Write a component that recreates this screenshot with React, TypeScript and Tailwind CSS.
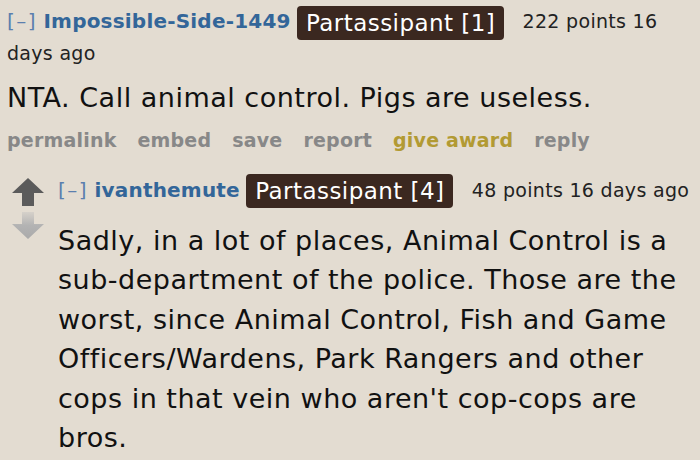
const Badge = ({ children }: { children: React.ReactNode }) => (
  <span className="-my-[2px] inline-block h-[34px] rounded-[4px] bg-[#3b2820] px-[9px] align-middle text-[23px] leading-[34px] tracking-[0.45px] text-white">{children}</span>
)

const UpArrow = () => (
  <svg width="32" height="28" viewBox="0 0 32 28">
    <polygon points="16,0 32,15 22,15 22,28 10,28 10,15 0,15" fill="#5b5b5b" />
  </svg>
)

const DownArrow = () => (
  <svg width="32" height="27" viewBox="0 0 32 27">
    <defs>
      <linearGradient id="dn" x1="0" y1="0" x2="0" y2="1">
        <stop offset="0" stopColor="#d6d1ca" />
        <stop offset="0.5" stopColor="#b3b3b3" />
        <stop offset="1" stopColor="#aaaaaa" />
      </linearGradient>
    </defs>
    <polygon points="10,0 22,0 22,12 32,12 16,27 0,12 10,12" fill="url(#dn)" />
  </svg>
)

export default function App() {
  return (
    <div className="h-[460px] w-[700px] overflow-hidden bg-[#e3dcd1] font-['DejaVu_Sans',Verdana,sans-serif] text-[#111]">
      {/* top-level comment */}
      <div className="pl-[7px] pr-2 pt-[6px]">
        <p className="text-[20px] leading-[31px] text-[#222]">
          <span className="tracking-[1.5px] text-[#5b7fae]">[–]</span>{' '}
          <span className="font-bold tracking-[0.2px] text-[#336699]">Impossible-Side-1449</span>{' '}
          <Badge>Partassipant [1]</Badge>{' '}
          <span className="ml-[12px] text-[19px] tracking-[0.3px]">222 points 16 days ago</span>
        </p>
        <p className="mt-[9px] text-[27px] leading-[40px] tracking-[0.5px]">NTA. Call animal control. Pigs are useless.</p>
        <div className="mt-[6px] flex gap-[21px] text-[19px] font-bold leading-[32px] tracking-[0.2px] text-[#888]">
          <span>permalink</span>
          <span>embed</span>
          <span>save</span>
          <span>report</span>
          <span className="text-[#b29a33]">give award</span>
          <span>reply</span>
        </div>
      </div>

      {/* child comment */}
      <div className="mt-[17px] flex">
        <div className="flex w-[58px] flex-col items-center gap-[6px] pt-[5px] pr-[2px]">
          <UpArrow />
          <DownArrow />
        </div>
        <div className="flex-1 pr-1">
          <p className="whitespace-nowrap text-[20px] leading-[34px] text-[#222]">
            <span className="tracking-[1.5px] text-[#5b7fae]">[–]</span>{' '}
            <span className="font-bold tracking-[0.2px] text-[#336699]">ivanthemute</span>{' '}
            <Badge>Partassipant [4]</Badge>{' '}
            <span className="ml-[12px] text-[19px] tracking-[0.3px]">48 points 16 days ago</span>
          </p>
          <p className="mt-[14px] text-[27px] leading-[39.6px] tracking-[0.5px]">
            Sadly, in a lot of places, Animal Control is a sub-department of the police. Those are the worst, since Animal Control, Fish and Game Officers/Wardens, Park Rangers and other cops in that vein who aren't cop-cops are bros.
          </p>
        </div>
      </div>
    </div>
  )
}
